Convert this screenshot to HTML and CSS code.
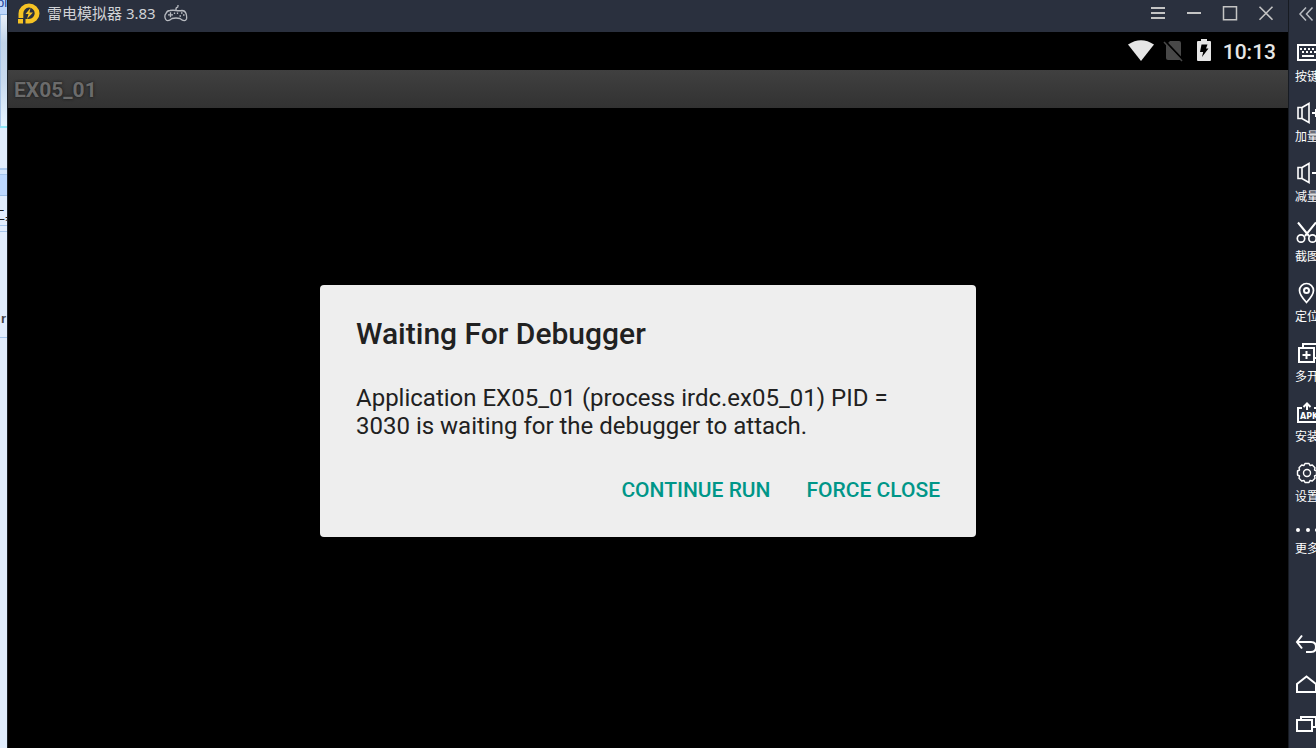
FILE: index.html
```html
<!DOCTYPE html>
<html lang="zh-CN">
<head>
    <meta charset="UTF-8">
    <meta name="viewport" content="width=device-width, initial-scale=1.0">
    <title>雷电模拟器 3.83</title>
    <link rel="stylesheet" href="styles.css">
</head>
<body>
    <!-- window behind the emulator -->
    <div class="behind">
        <div class="behind-title">pl</div>
        <div class="behind-ribbon"></div>
        <div class="behind-row"></div>
        <div class="behind-tab"></div>
        <div class="behind-tools">工具</div>
        <div class="behind-tree">r</div>
    </div>

    <main class="emulator">
        <header class="titlebar">
            <svg class="logo" width="22" height="22" viewBox="0 0 22 22">
                <path d="M0.500 15V10.500A10.500 10 0 1 1 11 20.500H7.500V16H11A5.700 5.700 0 1 0 5.300 10.500V15Z" fill="#f6c324"/>
                <path d="M0 16h5v4.500H0z" fill="#f6c324"/>
                <path d="M12.500 5L7.500 11h3l-1.500 5 6-6.500h-3.500z" fill="#f6c324"/>
            </svg>
            <span class="app-name">雷电模拟器 3.83</span>
            <svg class="gamepad" width="24" height="18" viewBox="0 0 24 18" fill="none" stroke="#b9bcc2" stroke-width="1.300">
                <path d="M12 5.500V4Q12 2.500 13 2.500T14 1V0"/>
                <path d="M6 5.500Q9 5 12 5.500T18 5.500Q21 5.500 22 8.500T22.500 14Q21 17.500 16 13.500Q12 12.500 8 13.500Q3 17.500 1.500 14T2 8.500Q3 5.500 6 5.500Z"/>
                <path d="M4 9.800h5M6.500 7.300v5M10.500 7.500v1.500M13.500 7.500v1.500M17 8h1.500M15.500 11H17M19 10h1.500"/>
            </svg>
            <div class="window-buttons">
                <button type="button" aria-label="菜单"><svg width="16" height="16" viewBox="0 0 16 16"><path d="M1 2h14M1 7h14M1 12h14"/></svg></button>
                <button type="button" aria-label="最小化"><svg width="16" height="16" viewBox="0 0 16 16"><path d="M1 7h14"/></svg></button>
                <button type="button" aria-label="最大化"><svg width="16" height="16" viewBox="0 0 16 16"><path d="M1.500 .7h13v13h-13z" stroke-width="1.500"/></svg></button>
                <button type="button" aria-label="关闭"><svg width="16" height="16" viewBox="0 0 16 16"><path d="M1.500 .7l13 13M14.500 .7l-13 13" stroke-width="1.600"/></svg></button>
            </div>
        </header>

        <div class="statusbar">
            <svg width="26" height="22" viewBox="0 0 26 22"><path d="M0 4.500Q13-4 26 4.500L13 21z" fill="#e6e6e6"/></svg>
            <svg class="no-sim" width="20" height="22" viewBox="0 0 20 22">
                <path d="M7 1h9q2 0 2 2v16q0 1-2 1H5q-2 0-2-2V5z" fill="#484848"/>
                <path d="M2 1l18 19" stroke="#000" stroke-width="2"/>
                <path d="M1 2l18 19" stroke="#484848" stroke-width="1.500"/>
            </svg>
            <svg class="battery" width="14" height="22" viewBox="0 0 14 22">
                <path d="M4 0h6v2h3q1 0 1 1v18q0 1-1 1H1q-1 0-1-1V3q0-1 1-1h3z" fill="#e6e6e6"/>
                <path d="M4.500 5.500h6L9 9.500h2.500L5 18l1.200-5H3z" fill="#000"/>
            </svg>
            <span class="clock">10:13</span>
        </div>

        <h1 class="activity-title">EX05_01</h1>

        <div class="screen">
            <section class="dialog" role="dialog" aria-labelledby="dialog-title">
                <h2 id="dialog-title">Waiting For Debugger</h2>
                <p>Application EX05_01 (process irdc.ex05_01) PID = 3030 is waiting for the debugger to attach.</p>
                <div class="dialog-buttons">
                    <button type="button">CONTINUE RUN</button>
                    <button type="button">FORCE CLOSE</button>
                </div>
            </section>
        </div>
    </main>

    <aside class="sidebar">
        <button type="button" class="collapse" aria-label="收起">
            <svg width="16" height="16" viewBox="0 0 16 16"><path d="M8 1.500L2 8l6 6.500M14.500 1.500L8.500 8l6 6.500" stroke="#b9bcc2" stroke-width="1.500"/></svg>
        </button>
        <div class="tools">
            <button type="button">
                <svg width="24" height="24" viewBox="0 0 24 24"><path d="M3 4h22v15H3z"/><path d="M5 8h18M7 11h14" stroke-dasharray="2 2"/><path d="M7 15h12"/></svg>
                <span>按键</span>
            </button>
            <button type="button">
                <svg width="24" height="24" viewBox="0 0 24 24"><path d="M7 6.500L14 2.500v19l-7-4H3v-11zM7 6.500v11" stroke-width="1.600"/><path d="M17 12h8M21 8v8"/></svg>
                <span>加量</span>
            </button>
            <button type="button">
                <svg width="24" height="24" viewBox="0 0 24 24"><path d="M7 6.500L14 2.500v19l-7-4H3v-11zM7 6.500v11" stroke-width="1.600"/><path d="M17 12h8"/></svg>
                <span>减量</span>
            </button>
            <button type="button">
                <svg width="24" height="24" viewBox="0 0 24 24"><path d="M3 1.500l11 13.500M21 1.500L10 15"/><circle cx="6" cy="17.500" r="3.700" stroke-width="1.700"/><circle cx="17.500" cy="17.500" r="3.700" stroke-width="1.700"/></svg>
                <span>截图</span>
            </button>
            <button type="button">
                <svg width="24" height="24" viewBox="0 0 24 24"><path d="M11.500 21.500Q4.500 14 4.500 9.500a7 7 0 0 1 14 0Q18.500 14 11.500 21.500z" stroke-width="1.700"/><circle cx="11.500" cy="9.500" r="2.500"/></svg>
                <span>定位</span>
            </button>
            <button type="button">
                <svg width="24" height="24" viewBox="0 0 24 24"><path d="M4 7h15v14H4zM8 7V3h15v14h-4M11.500 10v8M7.500 14h8"/></svg>
                <span>多开</span>
            </button>
            <button type="button">
                <svg width="24" height="24" viewBox="0 0 24 24"><path d="M7 7H3v14h20V7h-4M12 9V3M8.500 6L12 2.500 15.500 6"/><text x="5" y="18">APK</text></svg>
                <span>安装</span>
            </button>
            <button type="button">
                <svg width="24" height="24" viewBox="0 0 24 24"><path d="M10 2.500h4l1 2 2.300-.5 2.700 2.700-.5 2.300 2 1v4l-2 1 .5 2.300-2.700 2.700-2.300-.5-1 2h-4l-1-2-2.300.5L4 17.300l.5-2.300-2-1v-4l2-1L4 6.700 6.700 4l2.300.5z" stroke-width="1.400" stroke-linejoin="round"/><circle cx="12" cy="12" r="3.500" stroke-width="1.400"/></svg>
                <span>设置</span>
            </button>
            <button type="button" class="more">
                <svg width="24" height="16" viewBox="0 0 24 16"><g fill="#fff" stroke="none"><circle cx="3" cy="9" r="2"/><circle cx="13" cy="9" r="2"/><circle cx="22" cy="9" r="2"/></g></svg>
                <span>更多</span>
            </button>
        </div>
        <nav class="android-keys">
            <button type="button" aria-label="返回"><svg width="24" height="24" viewBox="0 0 24 24"><path d="M7 3.500L2 10l5 6.500M2 10h14q5 0 5 5t-5 5h-5"/></svg></button>
            <button type="button" aria-label="主页"><svg width="24" height="24" viewBox="0 0 24 24"><path d="M2 20V12l9.500-7.500L21 12v8z"/></svg></button>
            <button type="button" aria-label="最近任务"><svg width="24" height="24" viewBox="0 0 24 24"><path d="M2 8h15v11H2zM6 8V5h15v10h-4"/></svg></button>
        </nav>
    </aside>
</body>
</html>
```

FILE: styles.css
```css
* {
    box-sizing: border-box;
}
body {
    margin: 0;
    height: 100vh;
    display: flex;
    overflow: hidden;
    background-color: #000;
    font-family: Roboto, "Noto Sans CJK SC", sans-serif;
}
button {
    border: 0;
    padding: 0;
    background: none;
    font-family: inherit;
    cursor: pointer;
}
svg {
    display: block;
    flex: none;
}

/* slice of the window behind */
.behind {
    flex: none;
    width: 8px;
    display: flex;
    flex-direction: column;
    overflow: hidden;
    border-right: 1px solid #1a2026;
    background-color: #e1edfd;
    color: #222;
    font-family: "Liberation Sans", "Noto Sans CJK SC", sans-serif;
    font-size: 13px;
}
.behind-title {
    height: 15px;
    line-height: 5px;
    background-color: #bed7fb;
    border-bottom: 1px solid #8db4e3;
    color: #24469a;
    text-indent: -3px;
}
.behind-ribbon {
    height: 113px;
    background: linear-gradient(#e8eff8, #c1d4e9 25%, #c8daee 60%, #e5f4ff);
    border-left: 1px solid #a9c6e8;
    border-bottom: 2px solid #8ee8f8;
}
.behind-row {
    height: 47px;
    border-bottom: 1px solid #a5c6ed;
    background: linear-gradient(#e1edfd 40px, #abc9ed 40px, #abc9ed 42px, #d5e6fc 42px);
}
.behind-tab {
    height: 21px;
    background-color: #bcd8ff;
    border-bottom: 1px solid #9cbfe8;
}
.behind-tools {
    height: 36px;
    line-height: 38px;
    white-space: nowrap;
    text-indent: -8px;
    border-bottom: 1px solid #a5c6ed;
    background: linear-gradient(#e1edfd 29px, #a5c6ed 29px, #a5c6ed 30px, #e1edfd 30px);
}
.behind-tree {
    height: 106px;
    padding-top: 78px;
    border-bottom: 1px solid #a5c6ed;
    line-height: 18px;
    font-weight: bold;
    color: #444;
    text-indent: 1px;
}

/* emulator window */
.emulator {
    flex: 1;
    min-width: 0;
    display: flex;
    flex-direction: column;
}
.titlebar {
    height: 32px;
    padding: 0 14px 4px 10px;
    display: flex;
    align-items: center;
    background-color: #2a303e;
    color: #d0d2d6;
}
.app-name {
    margin: 0 8px 2px 7px;
    font-family: "Noto Sans", "Noto Sans CJK SC", sans-serif;
    font-size: 15px;
    line-height: 20px;
    white-space: nowrap;
}
.window-buttons {
    margin-left: auto;
    display: flex;
    gap: 20px;
}
.window-buttons svg {
    fill: none;
    stroke: #c4c4c4;
    stroke-width: 2;
}
.statusbar {
    height: 38px;
    padding: 0 12px;
    display: flex;
    align-items: center;
    justify-content: flex-end;
    background-color: #000;
    color: #e6e6e6;
}
.no-sim {
    margin-left: 9px;
}
.battery {
    margin: 0 12px 2px 14px;
}
.clock {
    padding-top: 2px;
    font-size: 21px;
    font-weight: 500;
    line-height: 24px;
}
.activity-title {
    margin: 0;
    padding: 0 6px;
    height: 38px;
    background: linear-gradient(#404040, #323232);
    color: #6b6b6b;
    font-size: 21px;
    font-weight: bold;
    line-height: 40px;
    text-shadow: 0 0 3px #111;
}
.screen {
    flex: 1;
    display: flex;
    align-items: center;
    justify-content: center;
    padding-bottom: 34px;
}
.dialog {
    width: 90%;
    max-width: 656px;
    padding: 31px 36px;
    border-radius: 4px;
    background-color: #eee;
    color: #212121;
}
.dialog h2 {
    margin: 0 0 32px;
    font-size: 30px;
    font-weight: 500;
    line-height: 36px;
}
.dialog p {
    margin: 0 0 36px;
    font-size: 24px;
    line-height: 28px;
}
.dialog-buttons {
    display: flex;
    justify-content: flex-end;
    gap: 36px;
}
.dialog-buttons button {
    padding-bottom: 2px;
    color: #009688;
    font-size: 21px;
    font-weight: 500;
    line-height: 28px;
}

/* toolbar on the right, runs past the window edge */
.sidebar {
    flex: none;
    width: 28px;
    display: flex;
    flex-direction: column;
    align-items: flex-start;
    overflow: hidden;
    border-left: 1px solid #171b22;
    background-color: #2a303e;
    color: #fff;
}
.sidebar svg {
    overflow: visible;
    fill: none;
    stroke: #fff;
    stroke-width: 2;
}
.sidebar button {
    color: #fff;
}
.collapse {
    padding: 6px 8px 19px 9px;
}
.tools {
    padding-left: 6px;
    display: flex;
    flex-direction: column;
    gap: 16px;
}
.tools button {
    display: flex;
    flex-direction: column;
    gap: 2px;
    width: 24px;
    height: 44px;
    font-family: "Noto Sans CJK SC", sans-serif;
    font-size: 12px;
    line-height: 18px;
}
.tools span {
    white-space: nowrap;
}
.tools text {
    fill: #fff;
    stroke: none;
    font-family: "DejaVu Sans", sans-serif;
    font-size: 8px;
    font-weight: bold;
}
.android-keys {
    margin-top: auto;
    padding: 0 0 4px 6px;
}
.android-keys button {
    display: flex;
    align-items: center;
    height: 40px;
}
```
